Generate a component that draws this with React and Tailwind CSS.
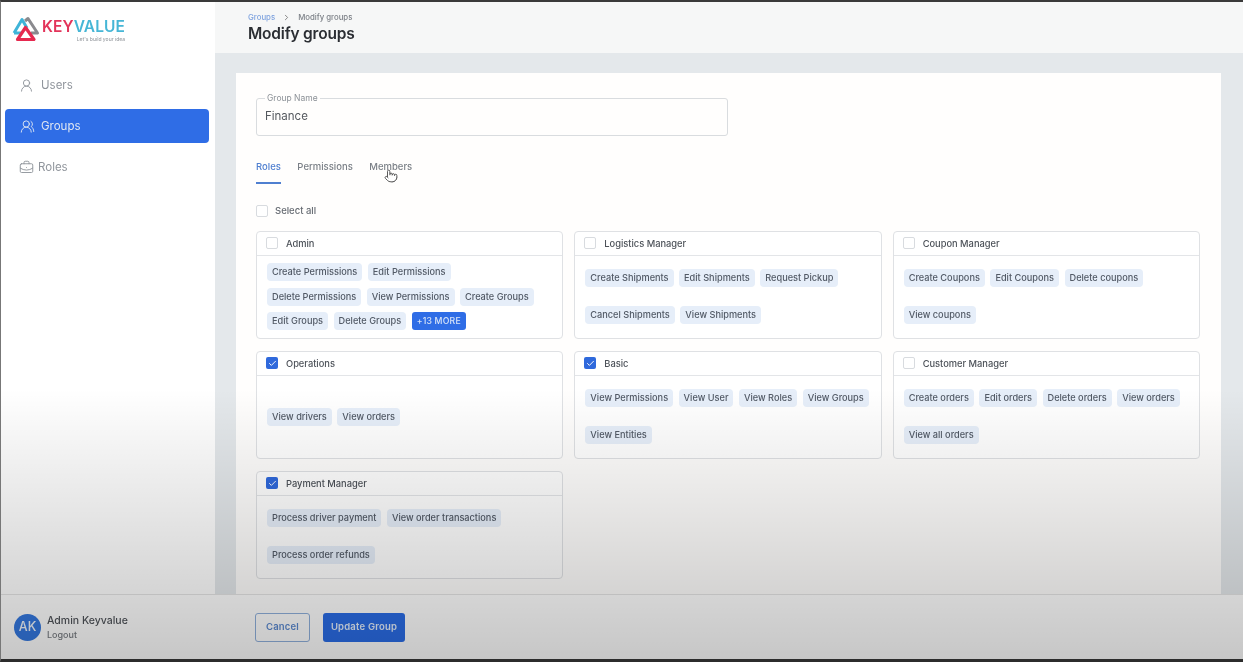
import { UserRound, UsersRound, BriefcaseBusiness, ChevronRight, Check, Pointer } from 'lucide-react';

const roles = [
  { name: 'Admin', rows: [['Create Permissions', 'Edit Permissions'], ['Delete Permissions', 'View Permissions', 'Create Groups'], ['Edit Groups', 'Delete Groups']], more: '+13 MORE' },
  { name: 'Logistics Manager', rows: [['Create Shipments', 'Edit Shipments', 'Request Pickup'], ['Cancel Shipments', 'View Shipments']] },
  { name: 'Coupon Manager', rows: [['Create Coupons', 'Edit Coupons', 'Delete coupons'], ['View coupons']] },
  { name: 'Operations', checked: true, rows: [['View drivers', 'View orders']] },
  { name: 'Basic', checked: true, rows: [['View Permissions', 'View User', 'View Roles', 'View Groups'], ['View Entities']] },
  { name: 'Customer Manager', rows: [['Create orders', 'Edit orders', 'Delete orders', 'View orders'], ['View all orders']] },
  { name: 'Payment Manager', checked: true, rows: [['Process driver payment', 'View order transactions'], ['Process order refunds']] },
];

function Box({ checked }) {
  if (checked) {
    return (
      <span className="flex h-[12px] w-[12px] shrink-0 items-center justify-center rounded-[2px] bg-[#2f69dc]">
        <Check size={9} strokeWidth={2.5} className="text-white" />
      </span>
    );
  }
  return <span className="h-[12px] w-[12px] shrink-0 rounded-[2px] border border-[#d8dbdf] bg-white" />;
}

function Logo() {
  return (
    <div className="flex items-start">
      <svg width="31" height="27" viewBox="0 0 31 27" fill="none">
        <path d="M3 17 L11 3.500 L16 12 M3 17 H11" stroke="#3fb4d8" strokeWidth="3" strokeLinejoin="round" />
        <path d="M14 5 L17 2.500 L26.500 17 H20" stroke="#8a8a8e" strokeWidth="3" strokeLinejoin="round" />
        <path d="M14.500 11.500 L23 23.500 H6.500 Z" stroke="#e6294f" strokeWidth="3.200" strokeLinejoin="round" />
      </svg>
      <div className="flex flex-col items-end">
        <div className="mt-[1px] text-[15.500px] leading-[19px] font-semibold tracking-[0.1px]">
          <span className="text-[#e3345a]">KEY</span>
          <span className="text-[#46b6d6]">VALUE</span>
        </div>
        <div className="text-[5px] leading-[6px] font-medium text-[#9a9ea3]">Let's build your idea</div>
      </div>
    </div>
  );
}

function NavItem({ icon: Icon, label, active, gap, pad }) {
  return (
    <div className={`mr-[6px] ml-[4px] flex h-[34px] items-center rounded-[4px] text-[11.500px] ${pad} ${gap} ${active ? 'bg-[#2f6de6] text-[#dfe6f2]' : 'text-[#90959c]'}`}>
      <Icon size={15} strokeWidth={1.5} />
      <span className="mt-[1px]">{label}</span>
    </div>
  );
}

function RoleCard({ role }) {
  return (
    <div className="flex h-[108px] flex-col rounded-[4px] border border-[#dfe1e4] bg-white">
      <div className="flex h-[24px] shrink-0 items-center gap-[8px] border-b border-[#e3e5e8] pl-[9px] text-[9.300px] font-medium text-[#4d5259]">
        <Box checked={role.checked} />
        <span className="mt-[1px]">{role.name}</span>
      </div>
      <div className="flex flex-1 flex-col justify-around py-[4px] pl-[10px]">
        {role.rows.map((row, i) => (
          <div key={i} className="flex gap-[5.500px]">
            {row.map((p) => (
              <span key={p} className="flex h-[18px] items-center rounded-[4px] bg-[#e6eef9] px-[5px] text-[9.200px] font-medium whitespace-nowrap text-[#525a66]">
                {p}
              </span>
            ))}
            {role.more && i === role.rows.length - 1 && (
              <span className="flex h-[18px] items-center rounded-[3px] bg-[#2f6de6] px-[5px] text-[8.700px] font-medium tracking-[0.2px] text-[#d8e4f8]">
                {role.more}
              </span>
            )}
          </div>
        ))}
      </div>
    </div>
  );
}

export default function App() {
  return (
    <div className="relative flex h-[662px] w-[1243px] flex-col overflow-hidden border-t-[2px] border-b-[3px] border-l border-t-[#3a3a3a] border-b-[#2c2c2c] border-l-[#777] bg-white font-['Inter','Noto_Sans',sans-serif] blur-[0.4px]">
      <div className="flex min-h-0 flex-1">
        {/* Sidebar */}
        <aside className="w-[214px] shrink-0 bg-white">
          <div className="h-[52px] pt-[14px] pl-[10px]">
            <Logo />
          </div>
          <div className="mt-[14px] flex flex-col gap-[7px]">
            <NavItem icon={UserRound} label="Users" pad="pl-[14px]" gap="gap-[7px]" />
            <NavItem icon={UsersRound} label="Groups" pad="pl-[15px]" gap="gap-[6px]" active />
            <NavItem icon={BriefcaseBusiness} label="Roles" pad="pl-[14px]" gap="gap-[4px]" />
          </div>
        </aside>

        {/* Main */}
        <div className="flex min-w-0 flex-1 flex-col bg-[#e4e8eb]">
          <header className="h-[51px] shrink-0 bg-[#f6f7f7] pl-[33px]">
            <div className="flex items-center gap-[7px] pt-[10px] text-[7.800px] leading-[10px] font-medium text-[#7c8087]">
              <span className="text-[#7fa3df]">Groups</span>
              <ChevronRight size={9} strokeWidth={2} className="text-[#666]" />
              <span>Modify groups</span>
            </div>
            <h1 className="mt-[1px] text-[15.500px] leading-[22px] font-semibold tracking-[-0.2px] text-[#2b2e33]">Modify groups</h1>
          </header>

          <main className="min-h-0 flex-1 overflow-hidden pt-[20px] pr-[22px] pl-[21px]">
            <div className="min-h-full bg-[#fffefd] pt-[19px] pr-[21px] pl-[20px]">
              <fieldset className="mt-[1px] h-[43px] w-[472px] rounded-[3px] border border-[#d9dcdf] px-[8px]">
                <legend className="px-[2px] text-[8.500px] leading-[11px] text-[#8b9096]">Group Name</legend>
                <div className="mt-[4px] text-[11.500px] leading-[16px] text-[#55595f]">Finance</div>
              </fieldset>

              <div className="mt-[23.500px] flex gap-[16.500px] text-[9.500px] font-medium">
                <div className="border-b-[2px] border-[#4f7fd0] pb-[9px] leading-[13px] text-[#4f7fd0]">Roles</div>
                <div className="leading-[13px] text-[#7b8087]">Permissions</div>
                <div className="relative leading-[13px] text-[#7b8087]">
                  Members
                  <Pointer size={14} strokeWidth={1.5} className="absolute top-[9px] left-[15px] fill-white text-[#444]" />
                </div>
              </div>

              <div className="mt-[20px] flex items-center gap-[7px] text-[9.500px] font-medium text-[#666b72]">
                <Box />
                <span>Select all</span>
              </div>

              <div className="mt-[13px] grid grid-cols-3 gap-x-[11px] gap-y-[12px]">
                {roles.map((r) => (
                  <RoleCard key={r.name} role={r} />
                ))}
              </div>
            </div>
          </main>
        </div>
      </div>

      {/* Footer */}
      <footer className="flex h-[65px] shrink-0 items-center border-t border-[#e5e5e5] bg-white">
        <div className="flex w-[254px] items-center gap-[6px] pl-[13px]">
          <div className="flex h-[27px] w-[27px] items-center justify-center rounded-full bg-[#3478e0] text-[12.500px] font-medium text-[#f0f5fc]">AK</div>
          <div>
            <div className="text-[10.500px] leading-[14px] font-medium text-[#50545a]">Admin Keyvalue</div>
            <div className="mt-[1px] text-[9px] leading-[12px] font-medium text-[#777b80]">Logout</div>
          </div>
        </div>
        <button className="h-[29px] w-[55px] rounded-[3px] border-[1.500px] border-[#8fb0dc] text-[9.500px] font-semibold tracking-[0.2px] text-[#5c8ad0]">Cancel</button>
        <button className="ml-[13px] h-[29px] w-[82px] rounded-[3px] bg-[#2a6ce6] text-[9.500px] font-semibold tracking-[0.2px] text-[#e4eefc]">Update Group</button>
      </footer>

      {/* video player shade */}
      <div className="pointer-events-none absolute right-0 bottom-0 left-0 h-[270px] bg-gradient-to-b from-transparent to-black/22" />
    </div>
  );
}
